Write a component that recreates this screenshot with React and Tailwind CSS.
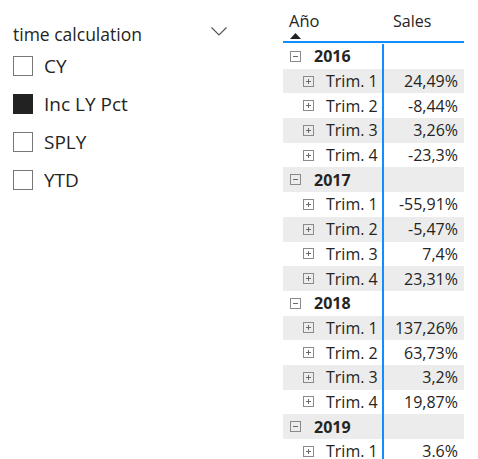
const data = [
  { year: '2016', rows: ['24,49%', '-8,44%', '3,26%', '-23,3%'] },
  { year: '2017', rows: ['-55,91%', '-5,47%', '7,4%', '23,31%'] },
  { year: '2018', rows: ['137,26%', '63,73%', '3,2%', '19,87%'] },
  { year: '2019', rows: ['3.6%'] },
]

const options = [
  { label: 'CY', on: false },
  { label: 'Inc LY Pct', on: true },
  { label: 'SPLY', on: false },
  { label: 'YTD', on: false },
]

function BoxIcon({ plus }) {
  return (
    <svg width="11" height="11" viewBox="0 0 11 11" className="shrink-0">
      <rect x="0.5" y="0.5" width="10" height="10" fill="none" stroke="#8a8a8a" />
      <line x1="3" y1="5.5" x2="8" y2="5.5" stroke="#6a6a6a" />
      {plus && <line x1="5.5" y1="3" x2="5.5" y2="8" stroke="#6a6a6a" />}
    </svg>
  )
}

export default function App() {
  const rows = []
  data.forEach((g) => {
    rows.push({ type: 'year', label: g.year })
    g.rows.forEach((v, i) => rows.push({ type: 'q', label: `Trim. ${i + 1}`, value: v }))
  })

  return (
    <div className="flex h-[459px] w-[478px] overflow-hidden bg-white font-['Open_Sans',sans-serif] text-[#252423]">
      <div className="w-[283px] shrink-0 pl-[13px] pt-[22px]">
        <div className="flex w-[214px] items-center justify-between">
          <span className="text-[17.5px] leading-[24px]">time calculation</span>
          <svg width="16" height="9" viewBox="0 0 16 9" className="mt-[-6px]">
            <polyline points="0.5,0.5 8,8 15.5,0.5" fill="none" stroke="#555" strokeWidth="1.2" />
          </svg>
        </div>
        <div className="mt-[10px] flex flex-col gap-[18px]">
          {options.map((o) => (
            <div key={o.label} className="flex h-[20px] items-center gap-[11px]">
              <span
                className={`h-[20px] w-[20px] shrink-0 border ${
                  o.on ? 'border-[#222] bg-[#222]' : 'border-[#777] bg-white'
                }`}
              />
              <span className="text-[19px] leading-none">{o.label}</span>
            </div>
          ))}
        </div>
      </div>

      <div className="w-[181px] shrink-0 pt-[10px]">
        <div className="flex h-[33px] border-b-2 border-[#118dff]">
          <div className="relative w-[101px] pl-[6px] text-[16.5px] leading-[22px]">
            Año
            <svg width="11" height="6" viewBox="0 0 11 6" className="absolute left-[7px] top-[23px]">
              <polygon points="0,6 5.5,0 11,6" fill="#222" />
            </svg>
          </div>
          <div className="pl-[9px] text-[16px] leading-[22px]">Sales</div>
        </div>
        <div className="flex flex-col pt-[1px]">
          {rows.map((r, i) => (
            <div
              key={i}
              className={`flex h-[24.7px] items-center ${i % 2 === 1 ? 'bg-[#ececec]' : 'bg-white'}`}
            >
              <div className="flex h-full w-[101px] items-center border-r-2 border-[#118dff]">
                {r.type === 'year' ? (
                  <div className="flex items-center gap-[13px] pl-[7px]">
                    <BoxIcon />
                    <span className="text-[16px] font-bold">{r.label}</span>
                  </div>
                ) : (
                  <div className="flex items-center gap-[12px] pl-[20px]">
                    <BoxIcon plus />
                    <span className="text-[16px]">{r.label}</span>
                  </div>
                )}
              </div>
              <div className="flex-1 pr-[6px] text-right text-[16px]">{r.value}</div>
            </div>
          ))}
        </div>
      </div>
    </div>
  )
}
